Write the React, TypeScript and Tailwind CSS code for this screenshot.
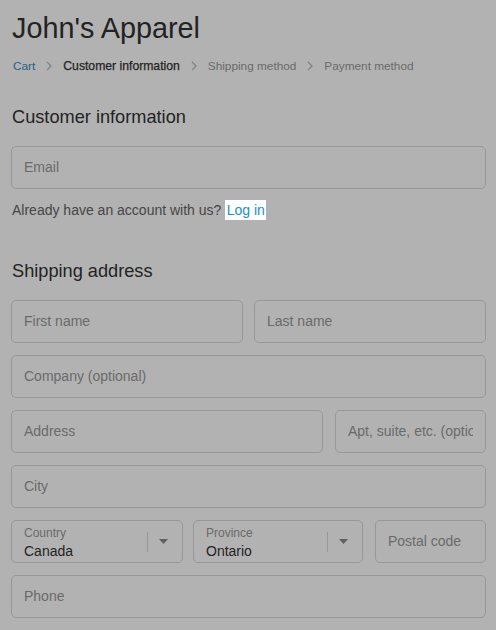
import React from 'react';

const Chevron: React.FC = () => (
  <svg className="mx-[11px] h-[10px] w-[6px] shrink-0" viewBox="0 0 6 10" fill="none">
    <path d="M1 1l4 4-4 4" stroke="#b8b8b8" strokeWidth="1.2" />
  </svg>
);

const Field: React.FC<{ placeholder: string; className?: string }> = ({ placeholder, className = '' }) => (
  <div
    className={`flex h-[43px] items-center rounded-[5px] border border-[#d9d9d9] bg-white px-[12px] text-[14px] text-[#999] ${className}`}
  >
    <span className="overflow-hidden whitespace-nowrap">{placeholder}</span>
  </div>
);

const Select: React.FC<{ label: string; value: string; className?: string }> = ({ label, value, className = '' }) => (
  <div className={`flex h-[43px] items-center rounded-[5px] border border-[#d9d9d9] bg-white pl-[12px] ${className}`}>
    <div className="flex min-w-0 flex-1 flex-col self-start pt-[5px]">
      <span className="text-[12px] leading-[14px] text-[#999]">{label}</span>
      <span className="mt-[2px] text-[14px] leading-[18px] text-[#333]">{value}</span>
    </div>
    <div className="h-[20px] w-px bg-[#d9d9d9]" />
    <div className="flex w-[34px] pl-[11px]">
      <svg className="h-[5px] w-[9px]" viewBox="0 0 9 5">
        <path d="M0 0h9L4.5 5z" fill="#8a8a8a" />
      </svg>
    </div>
  </div>
);

const App: React.FC = () => {
  return (
    <div className="relative min-h-[630px] bg-white pb-10 pl-[11px] pr-[10px] font-['Liberation_Sans',Arial,sans-serif]">
      <h1 className="pl-[1px] pt-[11px] text-[28.8px] leading-[34px] text-[#333]">John's Apparel</h1>

      <nav className="mt-[12px] flex items-center pl-[2px] text-[11.8px] leading-[18px]">
        <span className="text-[#338dbc]">Cart</span>
        <Chevron />
        <span className="text-[12.2px] text-[#333] [-webkit-text-stroke:0.25px_#333]">Customer information</span>
        <Chevron />
        <span className="text-[#999]">Shipping method</span>
        <Chevron />
        <span className="text-[#999]">Payment method</span>
      </nav>

      <h2 className="mt-[30px] pl-[1px] text-[18.2px] leading-[24px] text-[#333]">Customer information</h2>
      <div className="mt-[17px]">
        <Field placeholder="Email" />
      </div>
      <p className="mt-[11px] pl-[1px] text-[14px] leading-[20px] text-[#666]">
        Already have an account with us?{' '}
        <span className="relative z-10 inline-block bg-white px-[1.5px] text-[#1990c6]">Log in</span>
      </p>

      <h2 className="mt-[39px] pl-[1px] text-[18.2px] leading-[24px] text-[#333]">Shipping address</h2>
      <div className="mt-[17px] flex flex-col gap-[12px]">
        <div className="grid grid-cols-2 gap-[11px]">
          <Field placeholder="First name" />
          <Field placeholder="Last name" />
        </div>
        <Field placeholder="Company (optional)" />
        <div className="flex">
          <Field placeholder="Address" className="w-[312px]" />
          <Field placeholder="Apt, suite, etc. (optional)" className="ml-[12px] min-w-0 flex-1" />
        </div>
        <Field placeholder="City" />
        <div className="flex">
          <Select label="Country" value="Canada" className="w-[172px]" />
          <Select label="Province" value="Ontario" className="ml-[10px] w-[170px]" />
          <Field placeholder="Postal code" className="ml-[12px] min-w-0 flex-1" />
        </div>
        <Field placeholder="Phone" />
      </div>

      <div className="absolute inset-0 bg-black/30" />
    </div>
  );
};

export default App;
